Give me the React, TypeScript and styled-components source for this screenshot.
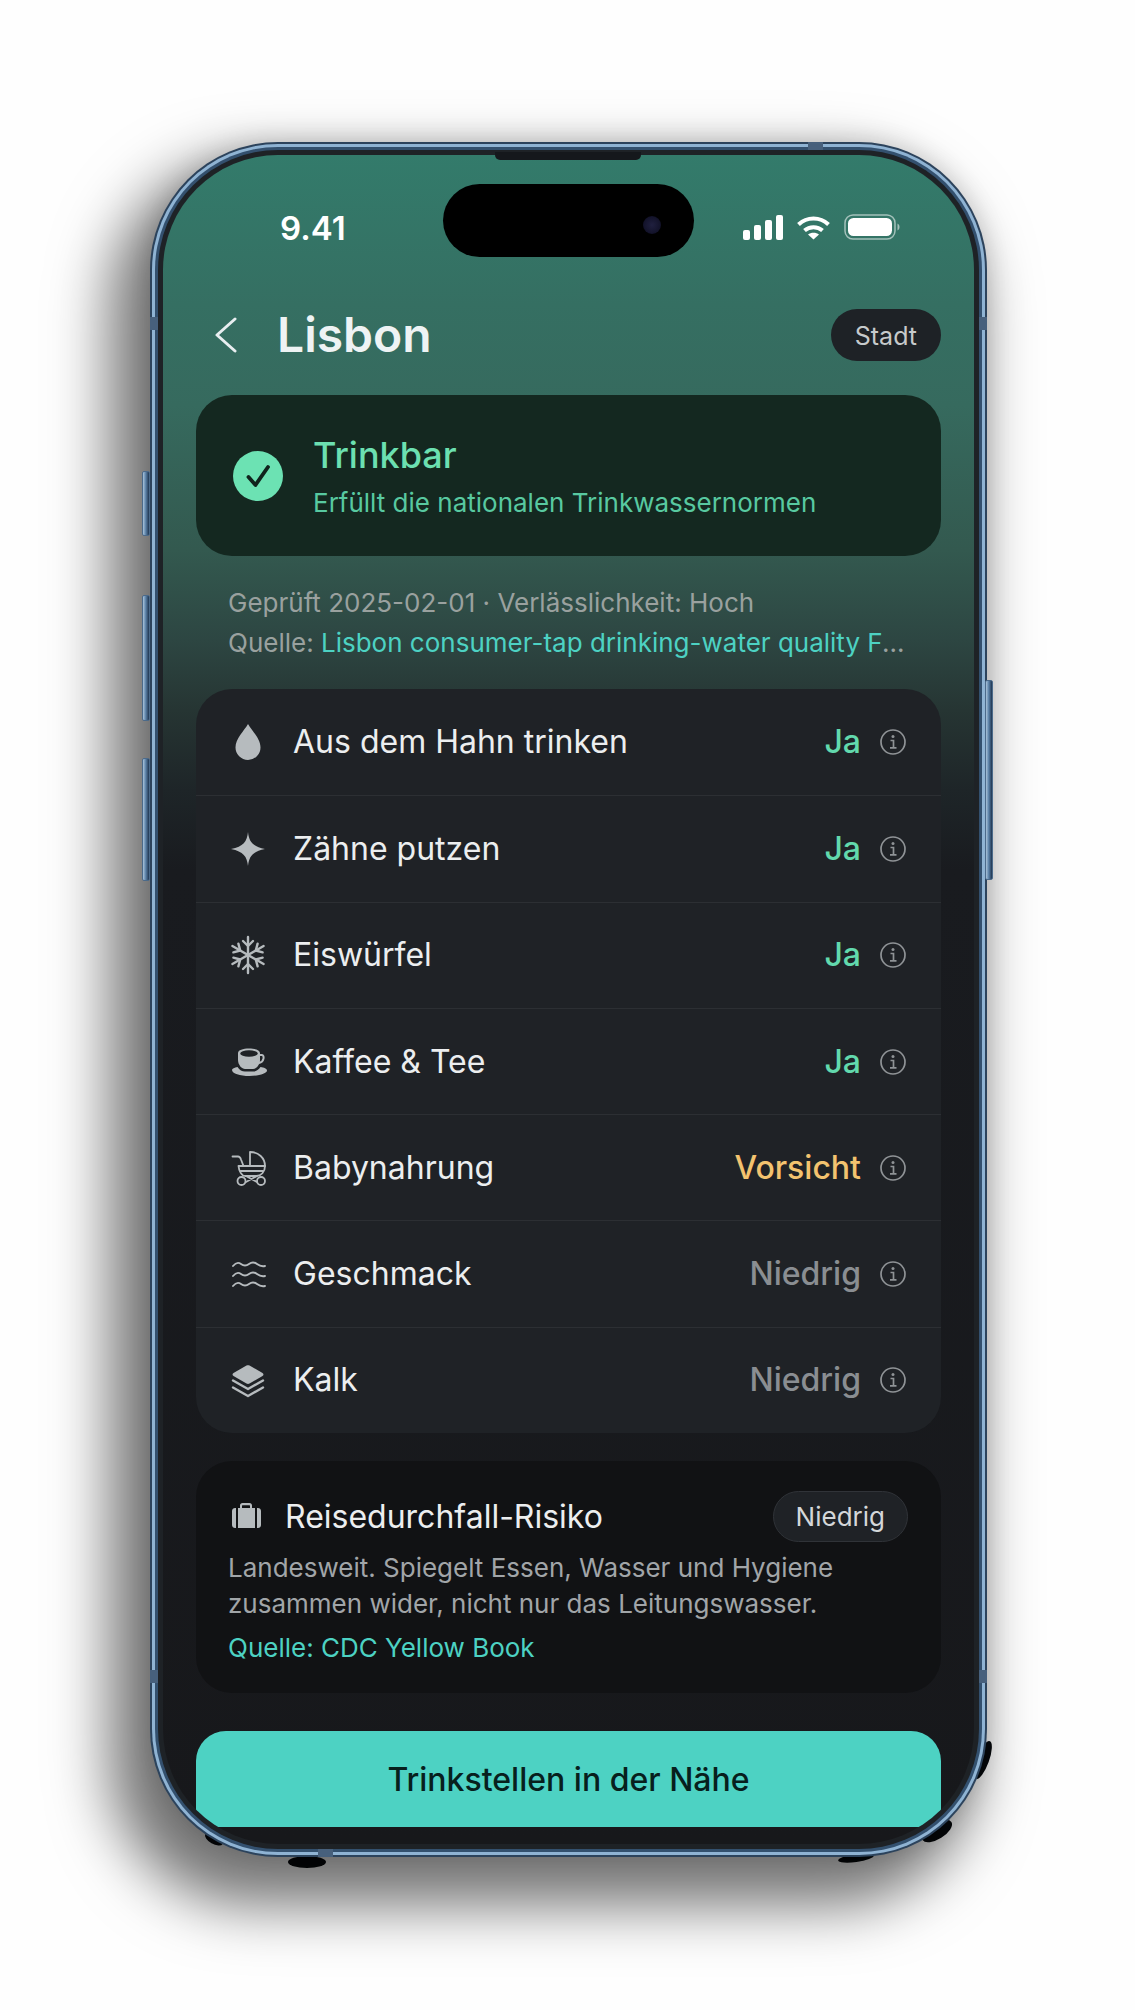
import { ReactNode } from "react";
import styled, { createGlobalStyle } from "styled-components";

const GlobalStyle = createGlobalStyle`
  html, body {
    margin: 0;
    padding: 0;
    background: #ffffff;
  }
  * {
    box-sizing: border-box;
  }
`;

const Page = styled.div`
  width: 1135px;
  height: 2010px;
  padding: 142px 0 0 150px;
  overflow: hidden;
  background: #fefefe;
  font-family: Inter, "Noto Sans", sans-serif;
`;

const Phone = styled.div`
  position: relative;
  isolation: isolate;
  width: 837px;
  height: 1715px;
`;

const Band = styled.div<{ $radius: number; $pad: number; $color: string; $shadow?: string }>`
  width: 100%;
  height: 100%;
  padding: ${({ $pad }) => $pad}px;
  border-radius: ${({ $radius }) => $radius}px;
  background: ${({ $color }) => $color};
  box-shadow: ${({ $shadow }) => $shadow || "none"};
`;

const Screen = styled.div`
  width: 100%;
  height: 100%;
  border-radius: 115px;
  overflow: hidden;
  padding: 29px 33px 0;
  display: flex;
  flex-direction: column;
  background: linear-gradient(
    180deg,
    #337b6b 0,
    #356f62 150px,
    #366a5e 250px,
    #33594f 395px,
    #2d4642 485px,
    #263533 555px,
    #1e2528 635px,
    #191b1f 715px,
    #17181b 100%
  );
`;

const SideButton = styled.div<{ $side: "left" | "right"; $top: number; $height: number }>`
  position: absolute;
  top: ${({ $top }) => $top}px;
  ${({ $side }) => ($side === "left" ? "left: -8px;" : "right: -6px;")}
  width: 8px;
  height: ${({ $height }) => $height}px;
  border-radius: 2px;
  background: linear-gradient(90deg, #a9c3da 0, #5c82a8 45%, #1f3550 100%);
  border: 1px solid #4b6a8a;
`;

const AntennaBand = styled.div<{ $x: number; $y: number; $w: number; $h: number }>`
  position: absolute;
  left: ${({ $x }) => $x}px;
  top: ${({ $y }) => $y}px;
  width: ${({ $w }) => $w}px;
  height: ${({ $h }) => $h}px;
  background: #47607c;
`;

const Speaker = styled.div`
  position: absolute;
  left: 345px;
  top: 10px;
  width: 146px;
  height: 8px;
  border-radius: 0 0 5px 5px;
  background: #15181c;
`;

const Grime = styled.svg`
  position: absolute;
  z-index: -1;
  left: 0;
  top: 0;
  width: 850px;
  height: 1730px;
  overflow: visible;
  pointer-events: none;
`;

const StatusBar = styled.div`
  display: grid;
  grid-template-columns: 1fr 251px 1fr;
  align-items: start;
  height: 73px;
  flex-shrink: 0;
`;

const Clock = styled.div`
  padding: 24px 0 0 84px;
  color: #ffffff;
  font-size: 33px;
  line-height: 40px;
  font-weight: 600;
`;

const Island = styled.div`
  height: 73px;
  border-radius: 37px;
  background: #000000;
  display: flex;
  align-items: center;
  justify-content: flex-end;
  padding: 8px 33px 0 0;
`;

const Lens = styled.div`
  width: 18px;
  height: 18px;
  border-radius: 50%;
  background: radial-gradient(circle, #20203f 0, #14142c 60%, #08081a 100%);
`;

const StatusIcons = styled.div`
  display: flex;
  align-items: center;
  gap: 13px;
  padding: 30px 0 0 49px;
`;

const Header = styled.div`
  display: flex;
  align-items: center;
  margin-top: 52px;
  height: 52px;
  flex-shrink: 0;
`;

const BackIcon = styled.svg`
  margin-left: 18px;
  width: 24px;
  height: 36px;
  flex-shrink: 0;
`;

const Title = styled.h1`
  flex: 1;
  margin: 0 0 0 39px;
  color: #eef3f4;
  font-size: 48px;
  line-height: 54px;
  font-weight: 600;
`;

const TypePill = styled.div`
  height: 52px;
  padding: 1px 24px 0;
  border-radius: 26px;
  background: #1e2226;
  color: #c6cacb;
  font-size: 25px;
  display: flex;
  align-items: center;
`;

const Verdict = styled.div`
  margin-top: 34px;
  height: 161px;
  flex-shrink: 0;
  border-radius: 36px;
  background: #142820;
  display: flex;
  align-items: center;
  padding-left: 37px;
  gap: 30px;
`;

const VerdictText = styled.div`
  display: flex;
  flex-direction: column;
  gap: 10px;
  padding-top: 2px;
`;

const VerdictTitle = styled.div`
  color: #6ce0b1;
  font-size: 36px;
  line-height: 42px;
  font-weight: 500;
`;

const VerdictSub = styled.div`
  color: #58c9a0;
  font-size: 26px;
  line-height: 34px;
`;

const Meta = styled.div`
  padding: 27px 31px 26px 32px;
  flex-shrink: 0;
`;

const MetaLine = styled.div`
  color: #9aa19f;
  font-size: 26px;
  line-height: 40px;
  white-space: nowrap;
  overflow: hidden;
  text-overflow: ellipsis;
`;

const SourceLink = styled.span`
  color: #4dd2c3;
`;

const UseList = styled.div`
  flex-shrink: 0;
  border-radius: 36px;
  background: #1f2226;
  overflow: hidden;
`;

const UseRow = styled.div`
  height: 106.3px;
  padding: 0 35px 0 32px;
  display: flex;
  align-items: center;
  border-top: 1px solid #2c2f33;

  &:first-child {
    border-top: none;
  }
`;

const IconBox = styled.div`
  width: 40px;
  height: 40px;
  flex-shrink: 0;
  color: #b6bbbe;
  display: flex;
  align-items: center;
  justify-content: center;
`;

const UseLabel = styled.div`
  flex: 1;
  margin-left: 25px;
  color: #eceeef;
  font-size: 32px;
  line-height: 40px;
`;

const toneColor = { ok: "#62d9ad", warn: "#f3c36f", low: "#8a8e92" };

const UseValue = styled.div<{ $tone: keyof typeof toneColor }>`
  color: ${({ $tone }) => toneColor[$tone]};
  font-size: 32px;
  line-height: 40px;
  font-weight: 500;
`;

const InfoIcon = styled.svg`
  margin-left: 19px;
  width: 26px;
  height: 26px;
  flex-shrink: 0;
  color: #8f9396;
`;

const RiskCard = styled.div`
  margin-top: 28px;
  height: 232px;
  flex-shrink: 0;
  border-radius: 36px;
  background: #111214;
  padding: 30px 33px 0 32px;
`;

const RiskHead = styled.div`
  display: flex;
  align-items: center;
  height: 51px;
`;

const RiskIcon = styled.svg`
  margin-left: 2px;
  width: 34px;
  height: 34px;
  flex-shrink: 0;
  color: #b6bbbe;
`;

const RiskTitle = styled.div`
  flex: 1;
  margin-left: 21px;
  color: #eceeef;
  font-size: 32px;
  line-height: 40px;
`;

const RiskPill = styled.div`
  height: 51px;
  padding: 0 22px;
  border-radius: 26px;
  background: #1f2226;
  border: 1px solid #303338;
  color: #d4d7d9;
  font-size: 26px;
  display: flex;
  align-items: center;
`;

const RiskBody = styled.p`
  margin: 8px 0 0;
  color: #a1a5a8;
  font-size: 26px;
  line-height: 36px;
`;

const RiskSource = styled.div`
  margin-top: 8px;
  color: #4dd2c3;
  font-size: 26px;
  line-height: 36px;
`;

const NearbyButton = styled.button`
  margin-top: 38px;
  height: 96px;
  flex-shrink: 0;
  border: none;
  border-radius: 30px 30px 0 0;
  background: #4dd2c3;
  color: #07201d;
  font-family: inherit;
  font-size: 32px;
  font-weight: 500;
`;

const Signal = () => (
  <svg width="40" height="25" viewBox="0 0 40 25" fill="#fff">
    <rect x="0" y="15" width="7" height="10" rx="2" />
    <rect x="11" y="10" width="7" height="15" rx="2" />
    <rect x="22" y="5" width="7" height="20" rx="2" />
    <rect x="33" y="0" width="7" height="25" rx="2" />
  </svg>
);

const Wifi = () => (
  <svg width="35" height="25" viewBox="0 0 34 25" fill="none" stroke="#fff" strokeWidth="4">
    <path d="M2 9.5C10.5 1.5 23.5 1.5 32 9.5" />
    <path d="M8 15.5C13 11 21 11 26 15.5" />
    <path d="M17 24.5L11.5 19.5C14.5 17 19.5 17 22.5 19.5Z" fill="#fff" stroke="none" />
  </svg>
);

const Battery = () => (
  <svg width="56" height="26" viewBox="0 0 56 26" fill="none">
    <rect x="1" y="1" width="50" height="24" rx="8" stroke="#ffffff" strokeOpacity="0.55" strokeWidth="1.5" />
    <rect x="4" y="4" width="44" height="18" rx="5.5" fill="#fff" />
    <path d="M53.5 9.5C55 10.5 55.5 11.5 55.5 13S55 15.5 53.5 16.5Z" fill="#fff" fillOpacity="0.55" />
  </svg>
);

const CheckBadge = () => (
  <svg width="50" height="50" viewBox="0 0 50 50">
    <circle cx="25" cy="25" r="25" fill="#6ce2b3" />
    <path d="M15.5 26L22.5 34L35 16" fill="none" stroke="#10241d" strokeWidth="3.8" strokeLinecap="round" strokeLinejoin="round" />
  </svg>
);

const Drop = () => (
  <svg width="40" height="40" viewBox="0 0 40 40" fill="currentColor">
    <path d="M20 2C16 9 7.5 16.5 7.5 25.5A12.5 12.5 0 0 0 32.5 25.5C32.5 16.5 24 9 20 2Z" />
  </svg>
);

const Sparkle = () => (
  <svg width="40" height="40" viewBox="0 0 40 40" fill="currentColor">
    <path d="M20 3C21 12.5 24.5 17.5 37 20C24.5 22.5 21 27.5 20 37C19 27.5 15.5 22.5 3 20C15.5 17.5 19 12.5 20 3Z" />
  </svg>
);

const Snowflake = () => (
  <svg width="40" height="40" viewBox="0 0 40 40" fill="none" stroke="currentColor" strokeWidth="2.4" strokeLinecap="round" strokeLinejoin="round">
    {[0, 60, 120].map((angle) => (
      <g key={angle} transform={`rotate(${angle} 20 20)`}>
        <path d="M20 2V38" />
        <path d="M15 6L20 11L25 6" />
        <path d="M15 34L20 29L25 34" />
      </g>
    ))}
  </svg>
);

const Coffee = () => (
  <svg width="40" height="40" viewBox="0 0 40 40" fill="currentColor">
    <path d="M10 11C10 8 15 6.5 21 6.5S32 8 32 11V18C32 23 28 27 25 27H17C14 27 10 23 10 18Z" />
    <ellipse cx="21" cy="11.5" rx="8.8" ry="3.2" fill="#1f2226" />
    <path d="M31 13H34C36.5 13 36.5 20 31 21" fill="none" stroke="currentColor" strokeWidth="2" />
    <path d="M4 28C4 26.5 6.5 25.5 9.5 25C11.5 28 14 29.5 17 29.5H25C28 29.5 30.5 28 32.5 25C36 25.5 39 26.5 39 28.5C39 31.5 31 34 21.5 34S4 31.5 4 28Z" />
  </svg>
);

const Carriage = () => (
  <svg width="40" height="40" viewBox="0 0 40 40" fill="none" stroke="currentColor" strokeWidth="1.8" strokeLinecap="round" strokeLinejoin="round">
    <path d="M4.5 8.5H10C11.5 8.5 12.5 10 13 11.5L15.5 18" />
    <path d="M22 4C30.5 4 37 10 37 18H22Z" />
    <path d="M10.5 18H37C37 24 33 28 28.5 28H17.5C13.5 28 11 23 10.5 18Z" />
    <path d="M12.5 23H35" />
    <path d="M18 28L29 34M29 28L18 34" />
    <circle cx="13.5" cy="33" r="4" />
    <circle cx="33" cy="33" r="4" />
  </svg>
);

const Waves = () => (
  <svg width="40" height="40" viewBox="0 0 40 40" fill="none" stroke="currentColor" strokeWidth="1.9" strokeLinecap="round">
    <path d="M5 12Q9 7 13 10T21 10T29 10T37 12" />
    <path d="M5 22Q9 17 13 20T21 20T29 20T37 22" />
    <path d="M5 32Q9 27 13 30T21 30T29 30T37 32" />
  </svg>
);

const Layers = () => (
  <svg width="40" height="40" viewBox="0 0 40 40" fill="currentColor">
    <path d="M18.5 5.5C19.5 5 20.5 5 21.5 5.5L34.5 13C35.8 13.8 35.8 15.2 34.5 16L21.5 23.5C20.5 24 19.5 24 18.5 23.5L5.5 16C4.2 15.2 4.2 13.8 5.5 13Z" />
    <path d="M5 20.5L20 29L35 20.5M5 27.5L20 36L35 27.5" fill="none" stroke="currentColor" strokeWidth="2.4" strokeLinecap="round" strokeLinejoin="round" />
  </svg>
);

const uses: { icon: ReactNode; label: string; value: string; tone: keyof typeof toneColor }[] = [
  { icon: <Drop />, label: "Aus dem Hahn trinken", value: "Ja", tone: "ok" },
  { icon: <Sparkle />, label: "Zähne putzen", value: "Ja", tone: "ok" },
  { icon: <Snowflake />, label: "Eiswürfel", value: "Ja", tone: "ok" },
  { icon: <Coffee />, label: "Kaffee & Tee", value: "Ja", tone: "ok" },
  { icon: <Carriage />, label: "Babynahrung", value: "Vorsicht", tone: "warn" },
  { icon: <Waves />, label: "Geschmack", value: "Niedrig", tone: "low" },
  { icon: <Layers />, label: "Kalk", value: "Niedrig", tone: "low" },
];

const buttons: { side: "left" | "right"; top: number; height: number }[] = [
  { side: "left", top: 329, height: 65 },
  { side: "left", top: 453, height: 126 },
  { side: "left", top: 616, height: 123 },
  { side: "right", top: 538, height: 200 },
];

const bands = [
  { x: 658, y: 0, w: 15, h: 8 },
  { x: 0, y: 175, w: 8, h: 13 },
  { x: 829, y: 175, w: 8, h: 13 },
  { x: 0, y: 1528, w: 8, h: 13 },
  { x: 829, y: 1528, w: 8, h: 13 },
  { x: 168, y: 1707, w: 15, h: 8 },
];

export default function App() {
  return (
    <>
      <GlobalStyle />
      <Page>
        <Phone>
          <Grime viewBox="0 0 850 1730" fill="#06090c">
            <ellipse cx="833" cy="1618" rx="6" ry="20" transform="rotate(20 833 1618)" />
            <ellipse cx="787" cy="1689" rx="17" ry="8" transform="rotate(-32 787 1689)" />
            <ellipse cx="706" cy="1716" rx="18" ry="4" transform="rotate(-8 706 1716)" />
            <ellipse cx="157" cy="1720" rx="19" ry="6" />
            <ellipse cx="64" cy="1697" rx="10" ry="5" transform="rotate(30 64 1697)" />
          </Grime>
          {buttons.map((b) => (
            <SideButton key={b.top} $side={b.side} $top={b.top} $height={b.height} />
          ))}
          <Band $radius={128} $pad={2} $color="#2c435c" $shadow="-26px 34px 60px 14px rgba(0,0,0,0.55), 0 -2px 24px rgba(0,0,0,0.12)">
            <Band $radius={126} $pad={3} $color="#8fb3d3">
              <Band $radius={123} $pad={3} $color="#33506e">
                <Band $radius={120} $pad={5} $color="#1e2226">
                  <Screen>
                    <StatusBar>
                      <Clock>9.41</Clock>
                      <Island>
                        <Lens />
                      </Island>
                      <StatusIcons>
                        <Signal />
                        <Wifi />
                        <Battery />
                      </StatusIcons>
                    </StatusBar>
                    <Header>
                      <BackIcon viewBox="0 0 24 36" fill="none" stroke="#e8eef0" strokeWidth="3" strokeLinecap="round" strokeLinejoin="round">
                        <path d="M21 2L3 18L21 34" />
                      </BackIcon>
                      <Title>Lisbon</Title>
                      <TypePill>Stadt</TypePill>
                    </Header>
                    <Verdict>
                      <CheckBadge />
                      <VerdictText>
                        <VerdictTitle>Trinkbar</VerdictTitle>
                        <VerdictSub>Erfüllt die nationalen Trinkwassernormen</VerdictSub>
                      </VerdictText>
                    </Verdict>
                    <Meta>
                      <MetaLine>Geprüft 2025-02-01 · Verlässlichkeit: Hoch</MetaLine>
                      <MetaLine>
                        Quelle: <SourceLink>Lisbon consumer-tap drinking-water quality Factsheet</SourceLink>
                      </MetaLine>
                    </Meta>
                    <UseList>
                      {uses.map((u) => (
                        <UseRow key={u.label}>
                          <IconBox>{u.icon}</IconBox>
                          <UseLabel>{u.label}</UseLabel>
                          <UseValue $tone={u.tone}>{u.value}</UseValue>
                          <InfoIcon viewBox="0 0 26 26" fill="none" stroke="currentColor" strokeWidth="1.7">
                            <circle cx="13" cy="13" r="12" />
                            <circle cx="13" cy="7.6" r="1.5" fill="currentColor" stroke="none" />
                            <path d="M10.5 11.5H13.5V18.5M10 18.8H16.5" />
                          </InfoIcon>
                        </UseRow>
                      ))}
                    </UseList>
                    <RiskCard>
                      <RiskHead>
                        <RiskIcon viewBox="0 0 34 34" fill="currentColor">
                          <path d="M10 8V5.5C10 4 11 3 12.5 3H19.5C21 3 22 4 22 5.5V8H20V5.8C20 5.4 19.8 5.2 19.4 5.2H12.6C12.2 5.2 12 5.4 12 5.8V8Z" />
                          <path d="M2 11C2 9 3.5 8 5 8H6V28H5C3.5 28 2 27 2 25Z" />
                          <rect x="8" y="8" width="17" height="20" />
                          <path d="M27 8H28C29.5 8 31 9 31 11V25C31 27 29.5 28 28 28H27Z" />
                        </RiskIcon>
                        <RiskTitle>Reisedurchfall-Risiko</RiskTitle>
                        <RiskPill>Niedrig</RiskPill>
                      </RiskHead>
                      <RiskBody>
                        Landesweit. Spiegelt Essen, Wasser und Hygiene
                        <br />
                        zusammen wider, nicht nur das Leitungswasser.
                      </RiskBody>
                      <RiskSource>Quelle: CDC Yellow Book</RiskSource>
                    </RiskCard>
                    <NearbyButton>Trinkstellen in der Nähe</NearbyButton>
                  </Screen>
                </Band>
              </Band>
            </Band>
          </Band>
          <Speaker />
          {bands.map((b) => (
            <AntennaBand key={`${b.x}-${b.y}`} $x={b.x} $y={b.y} $w={b.w} $h={b.h} />
          ))}
        </Phone>
      </Page>
    </>
  );
}
